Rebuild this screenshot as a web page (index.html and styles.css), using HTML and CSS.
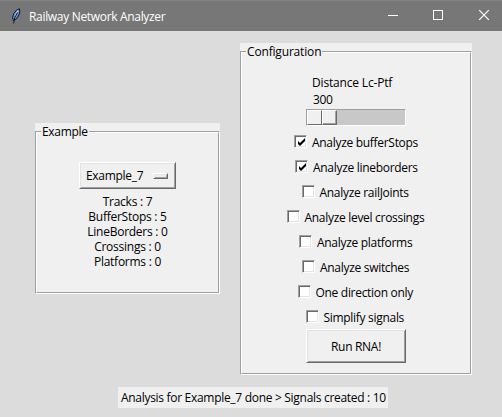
FILE: index.html
```html
<!DOCTYPE html>
<html lang="en">
<head>
<meta charset="utf-8">
<title>Railway Network Analyzer</title>
<link rel="stylesheet" href="styles.css">
</head>
<body>
<header class="titlebar">
  <svg class="feather" width="10" height="16" viewBox="0 0 10 16">
    <path d="M8.5 .8L5.5 2.2 2.8 5.5 1.6 9.3 2.3 12.5 5 11.2 7.5 8 8.9 4z" fill="#5a94d6" stroke="#101820"/>
    <path d="M7.2 2.5L4 8" stroke="#b5d5f5" stroke-width="1.2"/>
    <path d="M6.5 4.5L3.8 9.5 2.6 15.5" fill="none" stroke="#101820"/>
  </svg>
  <h1 class="title">Railway Network Analyzer</h1>
  <svg class="controls" width="114" height="31" viewBox="0 0 114 31" fill="none" stroke="#fff">
    <path d="M0 15.5h10M45.5 10.5h9v9h-9z" shape-rendering="crispEdges"/>
    <path d="M91.2 10.2l9.6 9.6M100.8 10.2l-9.6 9.6" stroke-width="1.2"/>
  </svg>
</header>
<main class="panels">
  <section class="frame example">
    <div class="groove"><div class="inner">
      <h2 class="legend">Example</h2>
      <button class="raised option"><span>Example_7</span><i class="raised indicator"></i></button>
      <ul class="stats">
        <li>Tracks : 7</li>
        <li>BufferStops : 5</li>
        <li>LineBorders : 0</li>
        <li>Crossings : 0</li>
        <li>Platforms : 0</li>
      </ul>
    </div></div>
  </section>
  <section class="frame config">
    <div class="groove"><div class="inner">
      <h2 class="legend wide">Configuration</h2>
      <div class="scale">
        <div class="scale-label">Distance Lc-Ptf</div>
        <div class="scale-value">300</div>
        <div class="trough"><i class="thumb"></i><i class="thumb end"></i></div>
      </div>
      <div class="checks">
        <label class="row buffer"><i class="box"><svg width="9" height="9" viewBox="0 0 9 9"><path d="M1 3v3l2 2 5-5V0L3 5z"/></svg></i><span>Analyze bufferStops</span></label>
        <label class="row line"><i class="box"><svg width="9" height="9" viewBox="0 0 9 9"><path d="M1 3v3l2 2 5-5V0L3 5z"/></svg></i><span>Analyze lineborders</span></label>
        <label class="row joints"><i class="box"></i><span>Analyze railJoints</span></label>
        <label class="row level"><i class="box"></i><span>Analyze level crossings</span></label>
        <label class="row platforms"><i class="box"></i><span>Analyze platforms</span></label>
        <label class="row switches"><i class="box"></i><span>Analyze switches</span></label>
        <label class="row direction"><i class="box"></i><span>One direction only</span></label>
        <label class="row simplify"><i class="box"></i><span>Simplify signals</span></label>
      </div>
      <button class="raised run">Run RNA!</button>
    </div></div>
  </section>
</main>
<footer class="status">Analysis for Example_7 done &gt; Signals created : 10</footer>
</body>
</html>
```
FILE: styles.css
```css
* { box-sizing: border-box; }
body {
  margin: 0;
  width: 502px;
  height: 417px;
  overflow: hidden;
  background: #dcdcdc;
  color: #000;
  font: 12px/15px "Open Sans", "Noto Sans", sans-serif;
  letter-spacing: -0.3px;
  white-space: nowrap;
}
h1, h2, ul { margin: 0; padding: 0; font: inherit; list-style: none; }
i { display: block; flex: none; }
svg { display: block; flex: none; }

.titlebar {
  display: flex;
  align-items: center;
  height: 31px;
  padding-left: 11px;
  background: #777;
  border-top: 1px solid #808080;
  color: #fff;
}
.title { margin-left: 8px; flex: 1; letter-spacing: -0.32px; }
.controls { margin-top: -1px; }

.panels { display: flex; align-items: flex-start; gap: 20px; padding: 12px 0 0 35px; }
.frame { display: flex; padding-top: 8px; background: #f0f0f0; }
.example { width: 185px; height: 171px; margin-top: 80px; }
.config { width: 232px; height: 332px; }
.groove { flex: 1; display: flex; border: 1px solid; border-color: #a0a0a0 #fff #fff #a0a0a0; }
.inner {
  flex: 1;
  display: flex;
  flex-direction: column;
  align-items: center;
  border: 1px solid;
  border-color: #fff #a0a0a0 #a0a0a0 #fff;
}
.legend { align-self: flex-start; height: 15px; margin: -9px 0 0 4px; padding: 0 1px; width: 48px; background: #f0f0f0; }
.legend.wide { width: 76px; letter-spacing: -0.17px; }

.raised {
  padding: 0;
  border: 1px solid;
  border-color: #fff #696969 #696969 #fff;
  box-shadow: inset 1px 1px #e3e3e3, inset -1px -1px #a0a0a0;
  border-radius: 0;
  background: #f0f0f0;
  color: #000;
  font: inherit;
  letter-spacing: inherit;
}
.option { display: flex; align-items: center; justify-content: space-between; width: 97px; height: 27px; margin-top: 23px; padding: 0 7px 0 6px; }
.indicator { width: 15px; height: 6px; }
.stats { margin-top: 5px; text-align: center; letter-spacing: -0.25px; }

.scale { width: 100px; margin-top: 16px; }
.scale-label { height: 17px; padding-left: 6px; letter-spacing: -0.17px; }
.scale-value { height: 17px; padding-left: 7px; }
.trough { display: flex; height: 17px; border: 1px solid; border-color: #a0a0a0 #fff #fff #a0a0a0; background: #c8c8c8; }
.thumb { width: 15px; background: #f0f0f0; border: 1px solid; border-color: #fff #696969 #696969 #fff; }
.thumb.end { box-shadow: inset -1px -1px #a0a0a0; }

.checks { margin-top: 3px; padding-right: 1px; display: flex; flex-direction: column; align-items: center; }
.row { display: flex; align-items: center; height: 25px; gap: 5px; }
.row span { padding-top: 1px; }
.box {
  width: 13px;
  height: 13px;
  padding: 2px;
  border: 1px solid;
  border-color: #a0a0a0 #fff #fff #a0a0a0;
  box-shadow: inset 1px 1px #696969, inset -1px -1px #e3e3e3;
  background: #fff;
}
.buffer { width: 123px; }
.line { width: 121px; }
.joints { width: 108px; }
.level { width: 138px; }
.platforms { width: 113px; }
.switches { width: 107px; }
.direction { width: 116px; }
.simplify { width: 100px; }
.run { width: 100px; height: 34px; }

.status { width: 270px; height: 21px; margin: 12px 0 0 118px; padding: 3px; background: #f0f0f0; }
```
